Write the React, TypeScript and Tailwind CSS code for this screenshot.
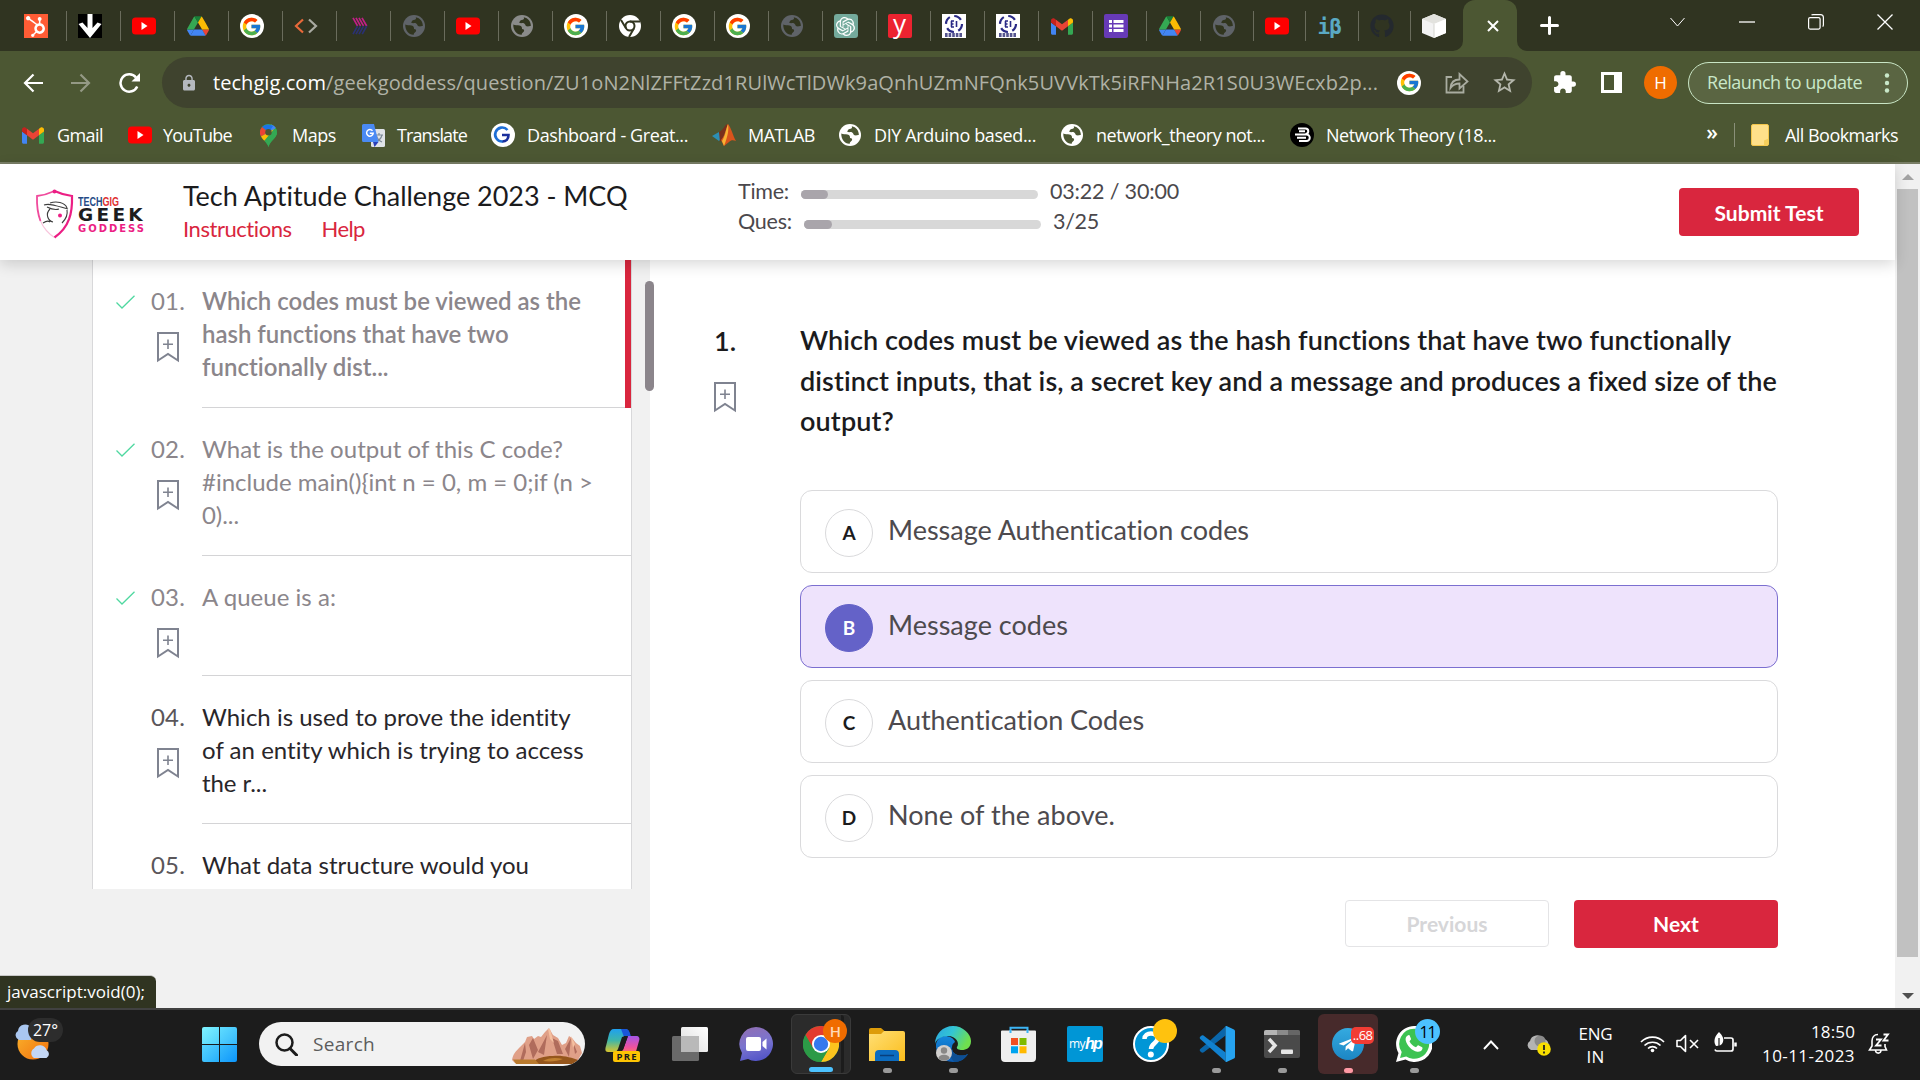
import React, { useLayoutEffect, useRef } from "react";
import { FaYoutube, FaHubspot, FaGithub, FaTelegramPlane } from "react-icons/fa";
import { FcGoogle } from "react-icons/fc";
import { SiOpenai } from "react-icons/si";
import { MdExtension, MdLock, MdOutlineStarBorder } from "react-icons/md";

/* Single line of text whose tracking is adjusted so that it spans `w` pixels. */
function Fit({ w, children, className = "" }: { w: number; children: string; className?: string }) {
  const ref = useRef<HTMLSpanElement>(null);
  useLayoutEffect(() => {
    const el = ref.current;
    if (!el) return;
    el.style.letterSpacing = "0px";
    const natural = el.getBoundingClientRect().width;
    el.style.letterSpacing = `${(w - natural) / children.length}px`;
  }, [w, children]);
  return (
    <span ref={ref} className={`inline-block whitespace-pre ${className}`}>
      {children}
    </span>
  );
}

/* ---------- favicons ---------- */

const YouTube = () => (
  <svg width="24" height="18" viewBox="0 0 24 18">
    <rect width="24" height="17" y="0.5" rx="3.5" fill="#f00" />
    <path d="M9.5 5v8l6-4z" fill="#fff" />
  </svg>
);

const Drive = () => (
  <svg width="22" height="20" viewBox="0 0 87.3 78">
    <path d="m6.6 66.85 3.85 6.65c.8 1.4 1.95 2.5 3.3 3.3l13.75-23.8h-27.5c0 1.55.4 3.1 1.2 4.5z" fill="#4285f4" />
    <path d="m43.65 25-13.75-23.8c-1.35.8-2.5 1.9-3.3 3.3l-25.4 44a9 9 0 0 0-1.2 4.5h27.5z" fill="#34a853" />
    <path d="m73.55 76.8c1.35-.8 2.5-1.9 3.3-3.3l1.6-2.75 7.65-13.25c.8-1.4 1.2-2.95 1.2-4.5h-27.5l5.85 11.5z" fill="#ea4335" />
    <path d="m43.65 25 13.75-23.8c-1.35-.8-2.9-1.2-4.5-1.2h-18.5c-1.6 0-3.15.45-4.5 1.2z" fill="#188038" />
    <path d="m59.8 53h-32.3l-13.75 23.8c1.35.8 2.9 1.2 4.5 1.2h50.8c1.6 0 3.15-.45 4.5-1.2z" fill="#4285f4" />
    <path d="m73.4 26.5-12.7-22c-.8-1.4-1.95-2.5-3.3-3.3l-13.75 23.8 16.15 28h27.45c0-1.55-.4-3.1-1.2-4.5z" fill="#fbbc04" />
  </svg>
);

const Google = () => (
  <span className="flex size-6 items-center justify-center rounded-full bg-white">
    <FcGoogle size={21} />
  </span>
);

const Gmail = () => (
  <svg width="22" height="17" viewBox="52 42 88 66">
    <path fill="#4285f4" d="M58 108h14V74L52 59v43c0 3.32 2.69 6 6 6" />
    <path fill="#34a853" d="M120 108h14c3.32 0 6-2.69 6-6V59l-20 15" />
    <path fill="#fbbc04" d="M120 48v26l20-15v-8c0-7.42-8.47-11.65-14.4-7.2" />
    <path fill="#ea4335" d="M72 74V48l24 18 24-18v26L96 92" />
    <path fill="#c5221f" d="M52 51v8l20 15V48l-5.600-4.200c-5.940-4.450-14.400-.22-14.400 7.200" />
  </svg>
);

const Globe = ({ fill, ink }: { fill: string; ink: string }) => (
  <svg width="22" height="22" viewBox="0 0 22 22">
    <circle cx="11" cy="11" r="11" fill={fill} />
    <path d="M2.300 9.500C4 10.500 6.500 10 8.500 10.500c2.500.6 2.600 2 2.500 3.500 1.500 0 2.500.8 2 2.300-.6 1.300-2.300 1.300-2.300 3.400C6 20 2 15.500 2.300 9.500z" fill={ink} />
    <path d="M12.800 2.200C13.500 4 12.500 5 10.500 5 8.500 5.200 9 7 8 7.500c1.500 1.200 3.500.2 5.200.9 1.400.7 1 2.500 2.600 2.900 1.500.3 2.500-.4 4-.2C20 6.500 17 3 12.800 2.200z" fill={ink} />
  </svg>
);

const HubSpot = () => (
  <span className="flex size-6 items-center justify-center bg-[#ff5c35] text-white">
    <FaHubspot size={21} />
  </span>
);

const DownArrow = () => (
  <svg width="24" height="24" viewBox="0 0 24 24">
    <rect width="24" height="24" fill="#000" />
    <path d="M9.500 0h5v14l5-5.500 4 1.500L12 24 .5 10l4-1.500 5 5.500z" fill="#fff" />
  </svg>
);

const Code = () => (
  <svg width="24" height="16" viewBox="0 0 24 16" fill="none" strokeWidth="2.200">
    <path d="M9 1.500 2 8l7 6.500" stroke="#e8693a" />
    <path d="M15 1.500 22 8l-7 6.500" stroke="#a9aaa2" />
  </svg>
);

const Stripes = () => (
  <svg width="16" height="18" viewBox="0 0 16 18" fill="none" strokeWidth="1.700">
    <path d="M1 .8l4.500 8M4 .8l4.500 8M7 .8l4.500 8M10 .8l4.700 8.200" stroke="#c21f86" />
    <path d="M5.500 9.200l-4.500 8M8.500 9.200l-4.500 8M11.500 9.200l-4.500 8M14.700 9l-4.500 8.200" stroke="#2a3172" />
  </svg>
);

const ChromeMono = () => (
  <svg width="22" height="22" viewBox="0 0 22 22" fill="none" stroke="#31351f" strokeWidth="2">
    <circle cx="11" cy="11" r="11" fill="#fff" stroke="none" />
    <circle cx="11" cy="11" r="4.500" />
    <path d="M11 6.500h10M7 13.200 2 5M15 13.200 10 22" />
  </svg>
);

const OpenAI = () => (
  <span className="flex size-6 items-center justify-center rounded-[3px] bg-[#74aa9c] text-white">
    <SiOpenai size={19} />
  </span>
);

const LetterY = () => (
  <span className="flex size-6 items-center justify-center rounded-[2px] bg-[#ec2330] pb-[6px] font-['Open_Sans'] text-[26px] leading-none text-white">
    y
  </span>
);

const RingMark = () => (
  <svg width="24" height="24" viewBox="0 0 24 24">
    <rect width="24" height="24" fill="#fff" />
    <circle cx="12" cy="10" r="8" fill="none" stroke="#2a2a86" strokeWidth="2.200" strokeDasharray="8 4.560" />
    <path d="M9 7h3M9 10h2.500M9 13h3M9.500 7v6M14.500 7v6" stroke="#2a2a86" strokeWidth="1.600" />
    <path d="M3 21h18" stroke="#55558f" strokeWidth="4" strokeDasharray="2.600 1" />
  </svg>
);

const Forms = () => (
  <svg width="24" height="24" viewBox="0 0 24 24">
    <rect width="24" height="24" rx="2" fill="#673ab7" />
    <g fill="#fff">
      <rect x="5" y="6" width="3" height="3" />
      <rect x="5" y="10.500" width="3" height="3" />
      <rect x="5" y="15" width="3" height="3" />
      <rect x="9.500" y="6" width="10" height="3" />
      <rect x="9.500" y="10.500" width="10" height="3" />
      <rect x="9.500" y="15" width="10" height="3" />
    </g>
  </svg>
);

const IBeta = () => (
  <span className="mt-[2px] font-['DejaVu_Sans_Mono'] text-[21px] leading-none font-bold tracking-[-1px] text-[#5aa9c4]">iβ</span>
);

const Cube = () => (
  <svg width="24" height="24" viewBox="0 0 24 24">
    <path d="M12 0l12 5v14l-12 5L0 19V5z" fill="#f3f3f3" />
    <path d="M12 0l12 5-12 5L0 5z" fill="#e2e2de" />
    <path d="M12 10l12-5v14l-12 5z" fill="#fff" />
    <path d="M12 10v14" stroke="#d5d5d0" />
  </svg>
);

const Dim = () => <Globe fill="#5f6368" ink="#31351f" />;

const tabs: React.ReactNode[] = [
  <HubSpot />, <DownArrow />, <YouTube />, <Drive />, <Google />, <Code />, <Stripes />, <Dim />, <YouTube />,
  <Globe fill="#8a8b8a" ink="#31351f" />, <Google />, <ChromeMono />, <Google />, <Google />, <Dim />, <OpenAI />, <LetterY />,
  <RingMark />, <RingMark />, <Gmail />, <Forms />, <Drive />,
];
const narrowTabs: React.ReactNode[] = [<Dim />, <YouTube />, <IBeta />, <FaGithub size={24} color="#24292e" />];

function TabStrip() {
  return (
    <div className="flex h-[51px] bg-[#303421] pl-[13px]">
      {tabs.map((icon, i) => (
        <div key={i} className="mt-[11px] flex h-[30px] w-[54px] items-center justify-center border-r-[1.5px] border-[#6a6c5c] pr-[8px]">
          {icon}
        </div>
      ))}
      {narrowTabs.map((icon, i) => (
        <div key={i} className="mt-[11px] flex h-[30px] w-[52.500px] items-center justify-center border-r-[1.5px] border-[#6a6c5c] pr-[5px]">
          {icon}
        </div>
      ))}
      <div className="mt-[11px] flex h-[30px] w-[52px] items-center pl-[11px]">
        <Cube />
      </div>
      <div className="relative flex w-[54px] items-center justify-center rounded-t-[12px] bg-[#4c5733] pl-[5px]">
        <svg className="absolute bottom-0 -left-[10px]" width="10" height="10"><path d="M10 0v10H0A10 10 0 0 0 10 0" fill="#4c5733" /></svg>
        <svg className="absolute -right-[10px] bottom-0" width="10" height="10"><path d="M0 0v10h10A10 10 0 0 1 0 0" fill="#4c5733" /></svg>
        <svg width="12" height="12" viewBox="0 0 12 12" stroke="#fff" strokeWidth="2"><path d="M1 1l10 10M11 1 1 11" /></svg>
      </div>
      <div className="flex w-[64px] items-center justify-center">
        <svg width="19" height="19" stroke="#fff" strokeWidth="3" strokeLinecap="round"><path d="M9.500 1.500v16M1.500 9.500h16" /></svg>
      </div>
      <div className="ml-auto flex h-[43px] items-center stroke-white">
        <svg className="mr-[54px]" width="15" height="10" fill="none"><path d="M.5 1 7.500 9l7-8" /></svg>
        <svg className="mr-[53px]" width="16" height="2"><path d="M0 1h16" strokeWidth="1.300" /></svg>
        <svg className="mr-[53px]" width="16" height="16" fill="none" strokeWidth="1.200">
          <rect x=".6" y="3.600" width="11.500" height="11.500" rx="1.500" />
          <path d="M3.500 1.200c.4-.4.900-.6 1.500-.6h7.500c1.700 0 2.900 1.200 2.900 2.900V11c0 .7-.3 1.200-.7 1.600" />
        </svg>
        <svg className="mr-[27px]" width="16" height="16" strokeWidth="1.300"><path d="M.5.5l15 15M15.500.5l-15 15" /></svg>
      </div>
    </div>
  );
}

function Toolbar() {
  return (
    <div className="flex h-[57px] items-center pt-[6px]">
      <svg className="ml-[23px]" width="20" height="20" fill="none" stroke="#fff" strokeWidth="2.200"><path d="M20 10H2M10.500 1.500 2 10l8.500 8.500" /></svg>
      <svg className="ml-[28px]" width="20" height="20" fill="none" stroke="#949985" strokeWidth="2.200"><path d="M0 10h18M9.500 1.500 18 10l-8.500 8.500" /></svg>
      <svg className="ml-[28px]" width="21" height="20" fill="none" stroke="#fff" strokeWidth="2.500">
        <path d="M18.200 13.500A8.700 8.700 0 1 1 17 4.500" />
        <path d="M21 0v8.500h-8.500z" fill="#fff" stroke="none" />
      </svg>
      <div className="ml-[22px] flex h-[51px] w-[1370px] items-center rounded-full bg-[#3f432e]">
        <MdLock className="ml-[18px]" size={18} color="#b5b9bf" />
        <p className="ml-[15px] w-[1184px] font-['Open_Sans'] text-[20px] whitespace-nowrap text-[#b0b2a6]">
          <Fit w={113} className="text-white">techgig.com</Fit>
          <Fit w={1052}>/geekgoddess/question/ZU1oN2NlZFFtZzd1RUlWcTlDWk9aQnhUZmNFQnk5UVVkTk5iRFNHa2R1S0U3WEcxb2p...</Fit>
        </p>
        <Google />
        <svg className="ml-[24px]" width="24" height="22" fill="none" stroke="#a9aca0" strokeWidth="1.800">
          <path d="M7 5H1.500v15.500h17V14" />
          <path d="M5.500 16c.5-6 4-8.500 9-8.500V2l8 7.500-8 7v-5c-4 0-6.500 1-9 4.500z" />
        </svg>
        <MdOutlineStarBorder className="ml-[22px]" size={27} color="#b5b7ac" />
      </div>
      <MdExtension className="ml-[20px]" size={25} color="#fff" />
      <svg className="ml-[24px]" width="21" height="21"><path fillRule="evenodd" d="M0 0h21v21H0zM3 3v15h10V3z" fill="#fff" /></svg>
      <span className="ml-[22px] flex size-[33px] items-center justify-center rounded-full bg-[#ef6c00] font-['Open_Sans'] text-[17px] text-white">H</span>
      <div className="ml-[11px] flex h-[42px] w-[220px] items-center rounded-full border-[1.5px] border-[#c9e5c5] bg-[#5a6542] pl-[18px] font-['Open_Sans'] text-[18px] text-[#c9e8c9]">
        <Fit w={155}>Relaunch to update</Fit>
        <svg className="ml-[22px]" width="6" height="20" fill="#c9e8c9"><circle cx="3" cy="2.500" r="2.200" /><circle cx="3" cy="10" r="2.200" /><circle cx="3" cy="17.500" r="2.200" /></svg>
      </div>
    </div>
  );
}

function Bookmark({ icon, gap, label, w, mr }: { icon: React.ReactNode; gap: string; label: string; w: number; mr: string }) {
  return (
    <div className={`flex shrink-0 items-center ${mr}`}>
      {icon}
      <Fit w={w} className={gap}>{label}</Fit>
    </div>
  );
}

const WhiteGlobe = () => <Globe fill="#fff" ink="#4c5733" />;

function BookmarksBar() {
  return (
    <div className="flex h-[54px] items-center pl-[22px] font-['Open_Sans'] text-[18px] text-white">
      <Bookmark icon={<Gmail />} gap="ml-[13px]" label="Gmail" w={46} mr="mr-[25px]" />
      <Bookmark icon={<YouTube />} gap="ml-[11px]" label="YouTube" w={69} mr="mr-[28px]" />
      <Bookmark
        icon={
          <svg width="17" height="23" viewBox="0 0 17 23">
            <path d="M8.500 0A8.500 8.500 0 0 1 17 8.500C17 14 10.500 16 8.500 23 6.500 16 0 14 0 8.500A8.500 8.500 0 0 1 8.500 0" fill="#34a853" />
            <path d="M8.500 8.500 16 4A8.500 8.500 0 0 0 11 .4L2 14" fill="#4285f4" />
            <path d="M2 3 8.500 8.500 13 2A8.500 8.500 0 0 0 2 3" fill="#1a73e8" />
            <path d="M2 3a8.500 8.500 0 0 0-1 9.500L8.500 8.500z" fill="#ea4335" />
            <path d="M1 12.500c.8 1.500 2 2.800 3.300 4.200L14 5 8.500 8.500z" fill="#fbbc04" />
            <path d="M8.500 23C10.500 16 17 14 17 8.500c0-1.700-.4-3.200-1.200-4.500L4.600 17.200C6.300 19 7.800 20.500 8.500 23" fill="#34a853" />
            <circle cx="8.500" cy="8.300" r="3.200" fill="#4c5733" />
          </svg>
        }
        gap="ml-[15px]" label="Maps" w={44} mr="mr-[26px]"
      />
      <Bookmark
        icon={
          <svg width="23" height="23" viewBox="0 0 23 23">
            <rect x="9" y="5" width="14" height="18" rx="1.500" fill="#dfe3e8" />
            <path d="M13 11h8M17 9v2M20 11c-1 4-4 6-6 7M14.500 12c1 3 3 5 5.500 6" stroke="#7d8a97" strokeWidth="1.200" fill="none" />
            <path d="M1.500 0H12l4.500 18H1.500A1.500 1.500 0 0 1 0 16.500v-15A1.500 1.500 0 0 1 1.500 0" fill="#4a8af4" />
            <path d="M11 18h5.500L12.500 23z" fill="#2a3fb8" />
            <path d="M10.500 6.800a3.300 3.300 0 1 0 .7 2.400H7.800" stroke="#fff" strokeWidth="1.500" fill="none" />
          </svg>
        }
        gap="ml-[12px]" label="Translate" w={70} mr="mr-[24px]"
      />
      <Bookmark
        icon={
          <svg width="24" height="24" viewBox="0 0 24 24">
            <circle cx="12" cy="12" r="12" fill="#fff" />
            <path d="M16.500 7A7 7 0 1 0 12 18.500" fill="none" stroke="#1e6fd6" strokeWidth="2.600" />
            <path d="M11 12h6.500c0 4-2.500 6.500-6 6.500" fill="none" stroke="#1a2f9c" strokeWidth="2.600" />
          </svg>
        }
        gap="ml-[12px]" label="Dashboard - Great..." w={161} mr="mr-[24px]"
      />
      <Bookmark
        icon={
          <svg width="24" height="24" viewBox="0 0 24 22">
            <path d="M0 12l7-4 5 4-5 5z" fill="#2c8fb5" />
            <path d="M7 8c4-1 6-8 9-8l-5 14-3 4z" fill="#7a2f1c" />
            <path d="M16 0c3 3 5 12 8 17-3-1-5-1-7 1l-5 4-3-6c4-4 5-12 7-16" fill="#d9541c" />
            <path d="M16 0c1 5 0 12-4 22l-2-5c3-4 4-12 6-17" fill="#f9b233" />
          </svg>
        }
        gap="ml-[12px]" label="MATLAB" w={67} mr="mr-[24px]"
      />
      <Bookmark icon={<WhiteGlobe />} gap="ml-[13px]" label="DIY Arduino based..." w={162} mr="mr-[25px]" />
      <Bookmark icon={<WhiteGlobe />} gap="ml-[13px]" label="network_theory not..." w={169} mr="mr-[25px]" />
      <Bookmark
        icon={
          <svg width="24" height="24" viewBox="0 0 24 24" fill="none" stroke="#fff" strokeWidth="2">
            <circle cx="12" cy="12" r="12" fill="#000" stroke="none" />
            <path d="M8 5.500h7.500a2.500 2.500 0 0 1 0 5.500M9 8.300h6M5 11.500h11.500a3.200 3.200 0 0 1 0 6.500H9M7 14.700h9" />
          </svg>
        }
        gap="ml-[12px]" label="Network Theory (18..." w={170} mr="mr-0"
      />
      <span className="mr-[16px] ml-auto pb-1 text-[21px] font-semibold">»</span>
      <span className="mr-[16px] h-6 w-px bg-[#8a9079]" />
      <svg className="mr-[15px]" width="19" height="22" viewBox="0 0 19 22">
        <rect x=".5" y=".5" width="17" height="21" rx="1.500" fill="#ffe08a" stroke="#f3c64b" />
        <path d="M13 21.500v-5l4.500-2v5a2 2 0 0 1-2 2z" fill="#f6cf5c" />
      </svg>
      <Fit w={113} className="mr-[22px]">All Bookmarks</Fit>
    </div>
  );
}

/* ---------- page ---------- */

function Logo() {
  return (
    <div className="flex h-[52px] w-[112px]">
      <svg width="39" height="52" viewBox="0 0 39 52">
        <path d="M19.500 2C13 5 7 6.500 2 7c-.5 17 2.500 31 17.500 41.500C34.500 38 37.500 24 37 7c-5-.5-11-2-17.500-5z" fill="#fff" />
        <path d="M19.500 2C13 5 7 6.500 2 7c-.3 9 .4 17 3.500 25" fill="none" stroke="#f04a9c" strokeWidth="1.800" />
        <path d="M5.500 32c3 7 7 12 14 16.500" fill="none" stroke="#f8c4dc" strokeWidth="1.200" />
        <path d="M19.500 2C26 5 32 6.500 37 7c.5 17-2.500 31-17.500 41.500" fill="none" stroke="#ec1e84" strokeWidth="2.200" />
        <circle cx="19.500" cy="2.500" r="2" fill="#ec1e84" />
        <path d="M9 16c6-2 13 1 24 4M15 14c6-2 15-1 17 5M8 34c3-2 5-3 7-1M15 20c-5 5-2 12 3 13M32 21c1 5-2 10-5 13M12 18c6 3 9 3 12 2" fill="none" stroke="#3c3c3c" strokeWidth="1.100" />
        <circle cx="25" cy="26.500" r="2" fill="#ec1e84" />
      </svg>
      <div className="flex flex-col pt-[7px] pl-[4px] whitespace-nowrap">
        <div className="h-[10px] origin-top-left scale-x-[.78] scale-y-110 font-['Liberation_Sans'] text-[11.500px] leading-[10px] font-bold text-[#254a86]">
          TECH<span className="text-[#e03030]">GIG</span>
        </div>
        <div className="mt-[2px] h-[14px] w-[68px] font-['DejaVu_Sans'] text-[18.500px] leading-[14px] font-bold text-[#1d1d1f]">
          <Fit w={68}>GEEK</Fit>
        </div>
        <div className="mt-[2px] h-[9px] w-[68px] font-['DejaVu_Sans'] text-[10px] leading-[9px] font-bold text-[#ec1e84]">
          <Fit w={68}>GODDESS</Fit>
        </div>
      </div>
    </div>
  );
}

function Progress({ label, labelW, fill, value, valueW }: { label: string; labelW: number; fill: string; value: string; valueW: number }) {
  return (
    <div className="flex h-[30px] items-center">
      <Fit w={labelW}>{label}</Fit>
      <div className="mt-[6px] ml-[12px] h-[9px] w-[237px] rounded-full bg-[#d8d8d8]">
        <div className={`h-full rounded-full bg-[#a9a5ab] ${fill}`} />
      </div>
      <Fit w={valueW} className="ml-[12px]">{value}</Fit>
    </div>
  );
}

function Header() {
  return (
    <header className="relative z-10 flex h-24 w-full bg-white shadow-[0_4px_14px_rgba(0,0,0,0.16)]">
      <div className="mt-[25px] ml-[35px] w-[148px]"><Logo /></div>
      <div className="w-[555px]">
        <h1 className="mt-[13px] h-[38px] text-[27px] leading-[38px] text-[#1b1b1d]">
          <Fit w={445}>Tech Aptitude Challenge 2023 - MCQ</Fit>
        </h1>
        <nav className="flex h-7 gap-[30px] text-[22px] leading-[28px] text-[#d9263e]">
          <Fit w={109}>Instructions</Fit>
          <Fit w={43}>Help</Fit>
        </nav>
      </div>
      <div className="mt-[12px] text-[21.500px] leading-[30px] text-[#4b484c]">
        <Progress label="Time:" labelW={51} fill="w-[27px]" value="03:22 / 30:00" valueW={129} />
        <Progress label="Ques:" labelW={54} fill="w-[28px]" value="3/25" valueW={46} />
      </div>
      <button className="mt-6 mr-9 ml-auto h-12 w-[180px] rounded-[4px] bg-[#d9263e] pt-[2px] text-[21px] font-bold text-white">
        <Fit w={109}>Submit Test</Fit>
      </button>
    </header>
  );
}

const MarkIcon = ({ className = "" }: { className?: string }) => (
  <svg className={className} width="22" height="31" viewBox="0 0 22 31" fill="none" stroke="#7f8390" strokeWidth="2">
    <path d="M1 1h20v27.500l-10-6.500-10 6.500z" />
    <path d="M11 7.500v9.500M6 12.300h10" strokeWidth="1.600" />
  </svg>
);

type Item = { n: string; done: boolean; active?: boolean; lines: [string, number][] };
const items: Item[] = [
  { n: "01.", done: true, active: true, lines: [["Which codes must be viewed as the", 379], ["hash functions that have two", 307], ["functionally dist...", 187]] },
  { n: "02.", done: true, lines: [["What is the output of this C code?", 361], ["#include main(){int n = 0, m = 0;if (n >", 391], ["0)...", 37]] },
  { n: "03.", done: true, lines: [["A queue is a:", 134]] },
  { n: "04.", done: false, lines: [["Which is used to prove the identity", 369], ["of an entity which is trying to access", 382], ["the r...", 65]] },
  { n: "05.", done: false, lines: [["What data structure would you", 327]] },
];

function QuestionItem({ item }: { item: Item }) {
  return (
    <li className={`flex shrink-0 pl-[23px] text-[24px] leading-[33px] ${item.lines.length === 1 ? "h-[120px]" : "h-[148px]"} ${item.active ? "border-r-[6px] border-[#d9263e]" : ""}`}>
      <div className="w-[35px] pt-[35px]">
        {item.done && (
          <svg width="19" height="14" fill="none" stroke="#4fd8a0" strokeWidth="1.300"><path d="M.5 7.500 6 13 18.500.8" /></svg>
        )}
      </div>
      <div className="w-[51px] pt-[24px]">
        <Fit w={34} className={item.done ? "text-[#8b868b]" : "text-[#5a565a]"}>{item.n}</Fit>
        <MarkIcon className="mt-[15px] ml-[6px]" />
      </div>
      <div className={`flex-1 border-b border-[#d4d4d6] pt-[24px] ${item.done ? "text-[#8b868b]" : "text-[#29262a]"} ${item.active ? "font-semibold" : ""}`}>
        {item.lines.map(([t, w]) => (
          <div key={t}><Fit w={w}>{t}</Fit></div>
        ))}
      </div>
    </li>
  );
}

function Option({ letter, label, w, selected }: { letter: string; label: string; w: number; selected?: boolean }) {
  return (
    <div className={`flex h-[83px] items-center rounded-[12px] border pl-[24px] ${selected ? "border-[#7b6fd0] bg-[#eee3fc]" : "border-[#dadadc] bg-white"}`}>
      <span className={`mt-[3px] flex size-12 items-center justify-center rounded-full border pt-px text-[19px] font-bold ${selected ? "border-[#6462c8] bg-[#6462c8] text-white" : "border-[#dadadc] text-[#1b1b1d]"}`}>
        {letter}
      </span>
      <Fit w={w} className="ml-[15px] pb-[3px] text-[27px] leading-[40px] text-[#4d4a4e]">{label}</Fit>
    </div>
  );
}

function Page() {
  return (
    <div className="flex h-[844px] bg-white font-['Lato']">
      <div className="flex w-[1895px] flex-col">
        <Header />
        <div className="flex flex-1">
          <aside className="flex w-[650px] flex-col bg-[#f1f1f1]">
            <div className="flex">
              <ul className="ml-[92px] flex h-[629px] w-[540px] shrink-0 flex-col overflow-hidden border-x border-[#d8d8da] bg-white">
                {items.map((it) => <QuestionItem key={it.n} item={it} />)}
              </ul>
              <div className="relative z-10 mt-[21px] ml-[13px] h-[110px] w-[9px] shrink-0 rounded-full bg-[#8b858b]" />
            </div>
            <div className="mt-auto flex h-[33px] w-[156px] items-center rounded-tr-[6px] border-t border-[#c8c8c8] bg-[#303421] pl-[7px] font-['Open_Sans'] text-[17px] text-white">
              <Fit w={138}>javascript:void(0);</Fit>
            </div>
          </aside>
          <main className="flex-1 pt-[60px] pl-[64px]">
            <div className="flex h-[170px]">
              <div className="w-[86px] text-[27px] leading-[41px] font-semibold text-[#1b1b1d]">
                <Fit w={22}>1.</Fit>
                <MarkIcon className="mt-[21px]" />
              </div>
              <div className="text-[27px] leading-[40.500px] font-semibold text-[#1b1b1d]">
                <div><Fit w={932}>Which codes must be viewed as the hash functions that have two functionally</Fit></div>
                <div><Fit w={977}>distinct inputs, that is, a secret key and a message and produces a fixed size of the</Fit></div>
                <div><Fit w={94}>output?</Fit></div>
              </div>
            </div>
            <div className="ml-[86px] flex w-[978px] flex-col gap-3">
              <Option letter="A" label="Message Authentication codes" w={362} />
              <Option letter="B" label="Message codes" w={180} selected />
              <Option letter="C" label="Authentication Codes" w={257} />
              <Option letter="D" label="None of the above." w={227} />
            </div>
            <div className="mt-[42px] ml-[86px] flex w-[978px] justify-end gap-[25px] text-[21px] font-bold">
              <button className="h-[47px] w-[204px] rounded-[4px] border border-[#e4e4e6] text-[#d6d6d8]"><Fit w={81}>Previous</Fit></button>
              <button className="h-[48px] w-[204px] rounded-[4px] bg-[#d9263e] text-white"><Fit w={46}>Next</Fit></button>
            </div>
          </main>
        </div>
      </div>
      <div className="flex w-[25px] flex-col items-center bg-[#f1f1f1]">
        <svg className="mt-[10px] mb-[9px]" width="12" height="6"><path d="M6 0l6 6H0z" fill="#a3a3a3" /></svg>
        <div className="h-[768px] w-[21px] bg-[#c1c1c1]" />
        <svg className="mt-auto mb-[9px]" width="12" height="6"><path d="M0 0h12L6 6z" fill="#505050" /></svg>
      </div>
    </div>
  );
}

/* ---------- taskbar ---------- */

const Copilot = () => (
  <svg width="37" height="36" viewBox="0 0 37 36">
    <defs>
      <linearGradient id="cpa" x1="0" y1="0" x2="0" y2="1"><stop offset="0" stopColor="#1fa0f0" /><stop offset=".5" stopColor="#3fb6a8" /><stop offset="1" stopColor="#d9c52c" /></linearGradient>
      <linearGradient id="cpb" x1="0" y1="0" x2="0" y2="1"><stop offset="0" stopColor="#a455e8" /><stop offset=".6" stopColor="#f0529c" /><stop offset="1" stopColor="#fd8a4a" /></linearGradient>
    </defs>
    <path d="M9 3h11c3 0 4 2 5 6l-8 2-4 12c-1 2-2 3-4 3H3c-3 0-3-3-2-6L4 8c1-3 2-5 5-5z" fill="url(#cpa)" />
    <path d="M16 3h5c3 0 4 4 5 8h-7z" fill="#1a55d8" />
    <path d="M23 10h8c3 0 4 2 3 5l-4 14H12l3-3c2 0 3-2 4-5z" fill="url(#cpb)" />
    <path d="M19 10h4l-5 14h-4z" fill="#1c1c1c" />
    <rect x="8" y="25" width="27" height="11" rx="2" fill="#fdc403" />
    <text x="21.500" y="34" textAnchor="middle" fontFamily="Open Sans" fontWeight="bold" fontSize="9.500" textLength="20" fill="#1a1a1a">PRE</text>
  </svg>
);

const TaskView = () => (
  <svg width="36" height="34">
    <defs><linearGradient id="tv" x1="0" y1="1" x2="1" y2="0"><stop offset="0" stopColor="#dcdcdc" /><stop offset="1" stopColor="#fff" /></linearGradient></defs>
    <rect x="9" width="27" height="25" rx="1.500" fill="url(#tv)" />
    <rect y="9" width="27" height="25" rx="1.500" fill="#6a6a6a" />
    <rect x="9" y="9" width="18" height="16" fill="#b9b9b9" />
  </svg>
);

const Chat = () => (
  <svg width="34" height="34" viewBox="0 0 34 34">
    <defs><linearGradient id="ch" x1="0.3" y1="0" x2="0.6" y2="1"><stop offset="0" stopColor="#8f6fb5" /><stop offset=".5" stopColor="#7a74cf" /><stop offset="1" stopColor="#5254c8" /></linearGradient></defs>
    <path d="M17 0a17 17 0 1 1-8 32L1 34l2-8A17 17 0 0 1 17 0" fill="url(#ch)" />
    <rect x="7" y="10" width="15" height="14" rx="2" fill="#fff" />
    <path d="M23.500 15 27.500 11.500v11L23.500 19z" fill="#fff" />
  </svg>
);

const Chrome = () => (
  <svg width="36" height="36" viewBox="0 0 36 36">
    <circle cx="18" cy="18" r="18" fill="#2c9a47" />
    <path d="M2.400 9A18 18 0 0 1 33.600 9H18z" fill="#e33b2e" />
    <path d="M33.600 9A18 18 0 0 1 18 36l7.800-13.500L18 9z" fill="#fcc31e" />
    <path d="M2.400 9 10.200 22.500 18 18V9z" fill="#e33b2e" />
    <path d="M2.400 9 10.200 22.500A9 9 0 0 0 18 27l7.800-4.500L18 36A18 18 0 0 1 2.400 9" fill="#2c9a47" />
    <circle cx="18" cy="18" r="9" fill="#fff" />
    <circle cx="18" cy="18" r="7.200" fill="#3579ee" />
  </svg>
);

const Folder = () => (
  <svg width="36" height="33" viewBox="0 0 36 33">
    <defs><linearGradient id="fo" x1="0" y1="0" x2="1" y2="1"><stop offset="0" stopColor="#ffdf75" /><stop offset="1" stopColor="#fbbd1c" /></linearGradient></defs>
    <path d="M0 2a2 2 0 0 1 2-2h10l3.500 3-3 4H0z" fill="#dd9c0a" />
    <path d="M0 6h12l3-3h19a2 2 0 0 1 2 2v28H0z" fill="url(#fo)" />
    <path d="M6 33v-7a4 4 0 0 1 4-4h16a4 4 0 0 1 4 4v7z" fill="#0c6cc0" />
    <path d="M11 27.500h14" stroke="#083f7c" strokeWidth="1.500" />
  </svg>
);

const Edge = () => (
  <svg width="37" height="36" viewBox="0 0 37 36">
    <defs>
      <linearGradient id="e1" x1="0" y1="0" x2="1" y2=".4"><stop offset="0" stopColor="#2aa5e2" /><stop offset=".5" stopColor="#33c5d4" /><stop offset="1" stopColor="#6fe04e" /></linearGradient>
      <linearGradient id="e2" x1="0" y1="0" x2="0" y2="1"><stop offset="0" stopColor="#1588dc" /><stop offset="1" stopColor="#0b5ab0" /></linearGradient>
    </defs>
    <path d="M1 18C0 27 7 36 18 36c7 0 12-3 15-8-8 4-17 0-16-7 0-3 2-4 3-5-1-4-6-6-10-6-5 0-8 4-9 8z" fill="url(#e2)" />
    <path d="M17 21c-1 7 8 11 16 7-3 5-8 8-13 8-5-3-7-10-3-15z" fill="#0d4f94" />
    <path d="M0 18C0 8 8 0 18 0s18 8 18 15-5 9-9 9c-3 0-6-1-5-3 3-4-1-11-9-11-6 0-12 3-13 8z" fill="url(#e1)" />
    <circle cx="9" cy="27" r="8" fill="#d2d0ce" />
    <circle cx="9" cy="24.500" r="3.200" fill="#8a8886" />
    <path d="M3.500 32.500c0-5 11-5 11 0A8 8 0 0 1 3.500 32.500" fill="#8a8886" />
  </svg>
);

const Store = () => (
  <svg width="36" height="36" viewBox="0 0 36 36">
    <path d="M9.500 7V1.800h17V7" fill="none" stroke="#3cb4f4" strokeWidth="2" />
    <path d="M0 5.500a1 1 0 0 1 1-1h33a1 1 0 0 1 1 1V32a4 4 0 0 1-4 4H4a4 4 0 0 1-4-4z" fill="#efefef" />
    <path d="M9.500 4v3M26.500 4v3" stroke="#3cb4f4" strokeWidth="2" />
    <rect x="10" y="12" width="7" height="7" fill="#f25022" />
    <rect x="18.500" y="12" width="7" height="7" fill="#7fba00" />
    <rect x="10" y="20.300" width="7" height="7" fill="#00a4ef" />
    <rect x="18.500" y="20.300" width="7" height="7" fill="#ffb900" />
  </svg>
);

const MyHp = () => (
  <span className="flex size-9 items-center justify-center rounded-[2px] bg-[#0096d6] pb-px text-white">
    <span className="font-['Open_Sans'] text-[12px] tracking-[-0.500px]">my</span>
    <span className="font-['Liberation_Sans'] text-[16px] leading-none font-bold tracking-[-2px] italic">hp</span>
  </span>
);

const Help = () => (
  <svg width="36" height="36" viewBox="0 0 36 36">
    <circle cx="18" cy="18" r="17" fill="#0096d6" stroke="#fff" strokeWidth="2" />
    <path d="M11.500 13c0-7.500 13-7 13-.5 0 4.500-6.500 5-6.500 10.500" fill="none" stroke="#fff" strokeWidth="4.500" />
    <circle cx="17.800" cy="28.500" r="3" fill="#fff" />
  </svg>
);

const VsCode = () => (
  <svg width="36" height="36" viewBox="0 0 36 36">
    <path d="M26.500.5 8.500 17 1.200 23c-.6.7-.6 1.600 0 2.200l.8.800c.8.800 1.800.9 2.800.2L26.500 9.500z" fill="#0a66aa" />
    <path d="M26.500 35.500v-9L4.800 9.800c-1-.7-2-.6-2.800.2l-.8.8c-.6.6-.6 1.500 0 2.200z" fill="#1181cf" />
    <path d="M26.500.3c.4-.4 1-.4 1.500-.1l7 3.200c.6.300 1 .9 1 1.600v26c0 .7-.4 1.300-1 1.600l-7 3.200c-.5.3-1.100.2-1.500-.1z" fill="#26a3f0" />
  </svg>
);

const Terminal = () => (
  <svg width="36" height="28" viewBox="0 0 36 28">
    <rect width="36" height="28" rx="2" fill="#4a4a4a" />
    <path d="M0 5V2a2 2 0 0 1 2-2h22v5z" fill="#b5b5b5" />
    <path d="M13 0h11v5H13z" fill="#8a8a8a" />
    <path d="M24 0h10a2 2 0 0 1 2 2v3H24z" fill="#666" />
    <path d="M5 9l6 6.500L5 22" fill="none" stroke="#e6e6e6" strokeWidth="3.500" />
    <rect x="17" y="19.500" width="12" height="4.500" rx="1" fill="#e6e6e6" />
  </svg>
);

const WhatsApp = () => (
  <svg width="36" height="36" viewBox="0 0 36 36">
    <path d="M18 0a18 18 0 1 1-8.500 33.500L0 36l2.500-9A18 18 0 0 1 18 0" fill="#fff" />
    <path d="M18 2.800a15 15 0 1 1-7.800 27.700L4 32l1.700-6A15 15 0 0 1 18 2.800" fill="#3cc352" />
    <path d="M12.300 9.200c-2 .7-3.300 3-2.500 5.600 1.500 5.500 6 9.800 11.500 11 2.500.4 5-1.200 5.200-3.300.1-.8-.2-1.200-.8-1.500l-3-1.500c-.7-.3-1-.2-1.500.4l-1.200 1.400c-3.200-1.300-5.200-3.300-6.500-6l1.200-1.500c.4-.5.4-.9.2-1.400l-1.300-3c-.2-.4-.7-.5-1.300-.2z" fill="#fff" />
  </svg>
);

type App = { icon: React.ReactNode; mark?: "dot" | "wide" | "pink"; tile?: "light" | "red"; badge?: React.ReactNode };
const apps: App[] = [
  { icon: <Copilot /> },
  { icon: <TaskView /> },
  { icon: <Chat /> },
  {
    icon: <Chrome />, mark: "wide", tile: "light",
    badge: <span className="absolute top-[4px] right-[3px] flex size-6 items-center justify-center rounded-full bg-[#f06c00] font-['Open_Sans'] text-[15px] font-semibold text-[#ffd9b8]">H</span>,
  },
  { icon: <Folder />, mark: "dot" },
  { icon: <Edge />, mark: "dot" },
  { icon: <Store /> },
  { icon: <MyHp /> },
  { icon: <Help />, badge: <span className="absolute top-[5px] right-[4px] size-6 rounded-full bg-[#ffc20e]" /> },
  { icon: <VsCode />, mark: "dot" },
  { icon: <Terminal />, mark: "dot" },
  {
    icon: <span className="flex size-8 items-center justify-center rounded-full bg-gradient-to-b from-[#34aae0] to-[#1c86c4] pr-[2px] text-white"><FaTelegramPlane size={19} /></span>,
    mark: "pink", tile: "red",
    badge: <span className="absolute top-[13px] right-[4px] flex h-[17px] w-[23px] items-center justify-center rounded-[5px] bg-[#f23c34] font-['Open_Sans'] text-[13px] tracking-[-0.5px] text-white">..68</span>,
  },
  {
    icon: <WhatsApp />, mark: "dot",
    badge: <span className="absolute top-[5px] right-[4px] flex size-[25px] items-center justify-center rounded-full bg-[#4cc2ff] font-['Open_Sans'] text-[16px] tracking-[-1px] text-black">11</span>,
  },
];

const markStyle = { dot: "w-[9px] bg-[#9a9a9a]", wide: "w-[24px] bg-[#4cc2ff]", pink: "w-[9px] bg-[#ff99a4]" };
const tileStyle = { light: "rounded-[6px] border border-[#3a3a3a] bg-[#2b2b2b]", red: "rounded-[6px] bg-[#472a2b]" };

function AppButton({ app }: { app: App }) {
  return (
    <div className="flex flex-1 justify-center pt-[4px]">
      <div className={`relative flex h-[60px] w-[60px] flex-col items-center ${app.tile ? tileStyle[app.tile] : ""}`}>
        {app.tile === "light" && <span className="absolute inset-y-0 right-[6px] w-[3px] rounded-r-[6px] bg-[#1c1c1c]" />}
        <div className="flex h-[60px] items-center">{app.icon}</div>
        {app.badge}
        {app.mark && <span className={`absolute bottom-[1px] h-[5px] rounded-full ${markStyle[app.mark]}`} />}
      </div>
    </div>
  );
}

function Taskbar() {
  return (
    <footer className="flex h-[72px] border-t-2 border-[#414141] bg-[#1c1c1c] font-['Open_Sans'] text-white">
      <div className="relative mt-[8px] ml-[15px] w-[187px]">
        <svg width="48" height="44" viewBox="0 0 48 44">
          <defs><linearGradient id="sun" x1="0" y1="0" x2="1" y2="1"><stop offset="0" stopColor="#fbb52c" /><stop offset="1" stopColor="#f0700f" /></linearGradient></defs>
          <circle cx="18" cy="26" r="15.500" fill="url(#sun)" />
          <path d="M4 22a5 5 0 0 1-1-9 7 7 0 0 1 13-3v12z" fill="#a9c6f0" />
          <path d="M19 40a5.500 5.500 0 0 1 0-9.500 7 7 0 0 1 12.500 1.500 4.500 4.500 0 0 1 0 8z" fill="#c3d7f5" />
        </svg>
        <span className="absolute top-0 left-[13px] flex h-[24px] w-[35px] items-center justify-center rounded-full bg-[#2d2d2d] text-[16px]"><Fit w={25}>27°</Fit></span>
      </div>
      <div className="mt-[17px] grid size-[35px] grid-cols-2 gap-[1.5px]">
        <span className="rounded-tl-[2px] bg-gradient-to-br from-[#7ff3ff] to-[#4fd2fb]" />
        <span className="rounded-tr-[2px] bg-gradient-to-br from-[#5fdcff] to-[#35b8fb]" />
        <span className="rounded-bl-[2px] bg-gradient-to-br from-[#55d4fd] to-[#26aefb]" />
        <span className="rounded-br-[2px] bg-gradient-to-br from-[#38bdfb] to-[#0a95fb]" />
      </div>
      <div className="mt-[12px] ml-[22px] flex h-[44px] w-[326px] items-center overflow-hidden rounded-full bg-[#f2f2f2]">
        <svg className="ml-[16px]" width="23" height="23" fill="none" stroke="#1c1c1c" strokeWidth="2.500"><circle cx="9.500" cy="9.500" r="8" /><path d="M15 15.500 21.500 22" strokeLinecap="round" strokeWidth="3" /></svg>
        <Fit w={62} className="ml-[15px] text-[19px] text-[#5c5c5c]">Search</Fit>
        <svg className="mt-[4px] mr-[2px] ml-auto" width="72" height="36" viewBox="0 0 72 36">
          <path d="M1 32c1-6 4-9 8-13l5-5 2-5 5-1 2 3 4-3 3 1 4-5 4-4 4 7 5 3 4 7 4-2 3-7 3 2 4 5 4 3 2 7-4 7-8 3H4z" fill="#e0a088" />
          <path d="M9 33l5-18 1 9-3 9zM22 31l-4-14 4-7 5 12zM33 27l3-20-9 17zM46 26l-5-16 6 3 5 13zM58 29l2-19-6 11zM66 24l-4-10 2 12z" fill="#b06c5c" />
          <path d="M37 1l2 0 4 14-4-4zM60 8l4 8-2 4z" fill="#f5c0a0" />
          <path d="M22 35c3-5 11-7 20-7 10-1 19 2 25 4l-5 4H22z" fill="#95561c" />
          <path d="M32 33c5-3 12-4 20-2-5 2-12 3-20 2" fill="#c08030" />
          <path d="M2 31.500h22l4 4.500H5z" fill="#b97a2e" />
        </svg>
      </div>
      <div className="ml-[6px] flex w-[856px]">
        {apps.map((a, i) => <AppButton key={i} app={a} />)}
      </div>
      <svg className="mt-[30px] ml-[36px]" width="16" height="10" fill="none" stroke="#fff" strokeWidth="1.900"><path d="M1 9l7-7.500L15 9" /></svg>
      <svg className="mt-[25px] ml-[28px]" width="25" height="21">
        <path d="M4 15a5 5 0 0 1-1-9 7 7 0 0 1 13-2 6 6 0 0 1 3 11z" fill="#b4b4b4" />
        <circle cx="13" cy="6" r="5.500" fill="#8a8a8a" />
        <circle cx="17" cy="14" r="6.800" fill="#f8df00" />
        <path d="M17 10v5M17 16.500v2" stroke="#222" strokeWidth="1.800" />
      </svg>
      <div className="mt-[12px] ml-[26px] w-[35px] text-center text-[17px] leading-[23px]">
        <Fit w={34}>ENG</Fit>
        <Fit w={18}>IN</Fit>
      </div>
      <svg className="mt-[24px] ml-[27px]" width="25" height="19" fill="none" stroke="#fff" strokeWidth="1.700">
        <path d="M1 8a16 16 0 0 1 23 0M4.500 11.500a11.500 11.500 0 0 1 16 0M8 14.500a6.500 6.500 0 0 1 9 0" />
        <circle cx="12.500" cy="16.500" r="1.800" fill="#fff" stroke="none" />
      </svg>
      <svg className="mt-[24px] ml-[11px]" width="24" height="20" fill="none" stroke="#fff" strokeWidth="1.600">
        <path d="M1 6.500h3.500l5-5v16l-5-5H1z" strokeLinejoin="round" /><path d="M14 6l8 8M22 6l-8 8" />
      </svg>
      <svg className="mt-[22px] ml-[12px]" width="25" height="22" fill="none" stroke="#fff" strokeWidth="1.700">
        <path d="M12 6h7a2 2 0 0 1 2 2v9a2 2 0 0 1-2 2H5a2 2 0 0 1-2-1.500" />
        <path d="M23.500 10.500v4" strokeWidth="2.500" />
        <path d="M7 0c3 3 5 6 4 10-1 3-4 4-7 4-2-3-3-8 3-14" fill="#fff" stroke="none" />
        <path d="M7 6v11" stroke="#1c1c1c" strokeWidth="1.200" />
      </svg>
      <div className="mt-[10px] ml-auto flex flex-col items-end text-[17px] leading-[24px]">
        <Fit w={44}>18:50</Fit>
        <Fit w={93}>10-11-2023</Fit>
      </div>
      <svg className="mt-[23px] mr-[30px] ml-[13px]" width="22" height="22" fill="none" stroke="#fff" strokeWidth="1.600">
        <path d="M10 1.500C6 1.500 4 4.500 4 8v5l-2.500 4h17L17 13.500v-2.500M7.500 17.500c.5 3.500 5 3.500 5.500 0" />
        <path d="M8 6.500h5L8 12.500h5.500M15.500 1.500H20l-4.500 6H20.500" strokeWidth="1.800" />
      </svg>
    </footer>
  );
}

export default function App() {
  return (
    <div className="h-[1080px] w-[1920px] overflow-hidden bg-white">
      <TabStrip />
      <div className="h-[113px] border-b-2 border-[#797e66] bg-[#4c5733]">
        <Toolbar />
        <BookmarksBar />
      </div>
      <Page />
      <Taskbar />
    </div>
  );
}
